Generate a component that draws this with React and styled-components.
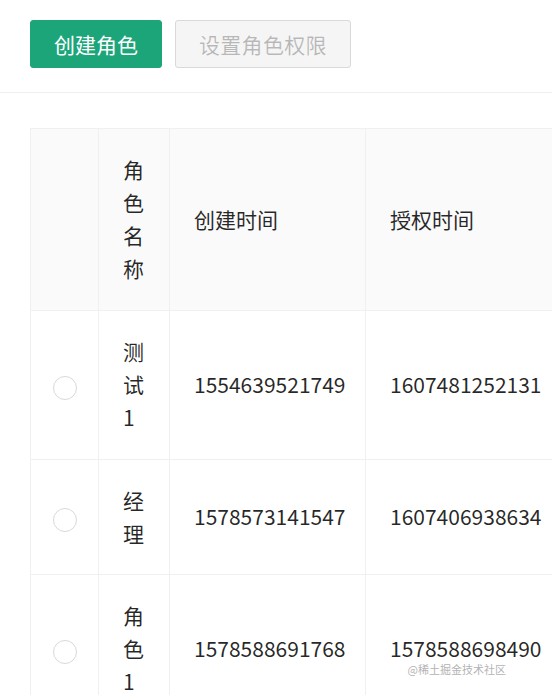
import React from 'react';
import styled, { createGlobalStyle } from 'styled-components';

const GlobalStyle = createGlobalStyle`
    body {
        margin: 0;
        background: #fff;
        overflow: hidden;
        font-family: "Noto Sans CJK SC", "Noto Sans", sans-serif;
        color: rgba(0, 0, 0, 0.85);
    }
`;

const Page = styled.div`
    position: relative;
    width: 552px;
    height: 695px;
    overflow: hidden;
`;

const Toolbar = styled.div`
    display: flex;
    gap: 13px;
    padding: 20px 30px 24px;
    border-bottom: 1px solid #f0f0f0;
`;

const Button = styled.button`
    height: 48px;
    padding: 0 23px;
    font-family: inherit;
    font-size: 21px;
    line-height: 46px;
    letter-spacing: ${({ primary }) => (primary ? '0' : '0.3px')};
    border-radius: 3px;
    border: 1px solid ${({ primary }) => (primary ? '#1da57a' : '#d9d9d9')};
    background: ${({ primary }) => (primary ? '#1da57a' : '#f5f5f5')};
    color: ${({ primary }) => (primary ? '#fff' : 'rgba(0, 0, 0, 0.25)')};
    cursor: ${({ disabled }) => (disabled ? 'not-allowed' : 'pointer')};
`;

const TableWrap = styled.div`
    padding: 35px 0 0 30px;
`;

const Table = styled.table`
    width: 700px;
    table-layout: fixed;
    border-collapse: separate;
    border-spacing: 0;
    border-top: 1px solid #f0f0f0;
    border-left: 1px solid #f0f0f0;
    font-size: 21px;
    line-height: 33px;
`;

const Th = styled.th`
    padding: 24px 24px 25px;
    background: #fafafa;
    font-weight: 400;
    text-align: left;
    border-right: 1px solid #f0f0f0;
    border-bottom: 1px solid #f0f0f0;
    word-break: break-all;
`;

const Td = styled.td`
    padding: ${({ select }) => (select ? '24px 0' : '24px 24px 24.5px')};
    text-align: ${({ select }) => (select ? 'center' : 'left')};
    vertical-align: middle;
    border-right: 1px solid #f0f0f0;
    border-bottom: 1px solid #f0f0f0;
    word-break: ${({ wrap }) => (wrap ? 'break-all' : 'normal')};
`;

const Radio = styled.span`
    display: inline-block;
    width: 24px;
    height: 24px;
    box-sizing: border-box;
    border: 1px solid #d9d9d9;
    border-radius: 50%;
    vertical-align: middle;
`;

const Watermark = styled.div`
    position: absolute;
    right: 46px;
    bottom: 18px;
    font-size: 11px;
    color: #b4b4b4;
`;

const roles = [
    { id: 1, name: '测试1', created: '1554639521749', authorized: '1607481252131' },
    { id: 2, name: '经理', created: '1578573141547', authorized: '1607406938634' },
    { id: 3, name: '角色1', created: '1578588691768', authorized: '1578588698490' },
];

const App = () => {
    return (
        <Page>
            <GlobalStyle />
            <Toolbar>
                <Button primary>创建角色</Button>
                <Button disabled>设置角色权限</Button>
            </Toolbar>

            <TableWrap>
                <Table>
                    <colgroup>
                        <col style={{ width: 68 }} />
                        <col style={{ width: 71 }} />
                        <col style={{ width: 196 }} />
                        <col />
                    </colgroup>
                    <thead>
                        <tr>
                            <Th />
                            <Th>角色名称</Th>
                            <Th>创建时间</Th>
                            <Th>授权时间</Th>
                        </tr>
                    </thead>
                    <tbody>
                        {roles.map((role) => (
                            <tr key={role.id}>
                                <Td select><Radio /></Td>
                                <Td wrap>{role.name}</Td>
                                <Td>{role.created}</Td>
                                <Td>{role.authorized}</Td>
                            </tr>
                        ))}
                    </tbody>
                </Table>
            </TableWrap>

            <Watermark>@稀土掘金技术社区</Watermark>
        </Page>
    );
};

export default App;
